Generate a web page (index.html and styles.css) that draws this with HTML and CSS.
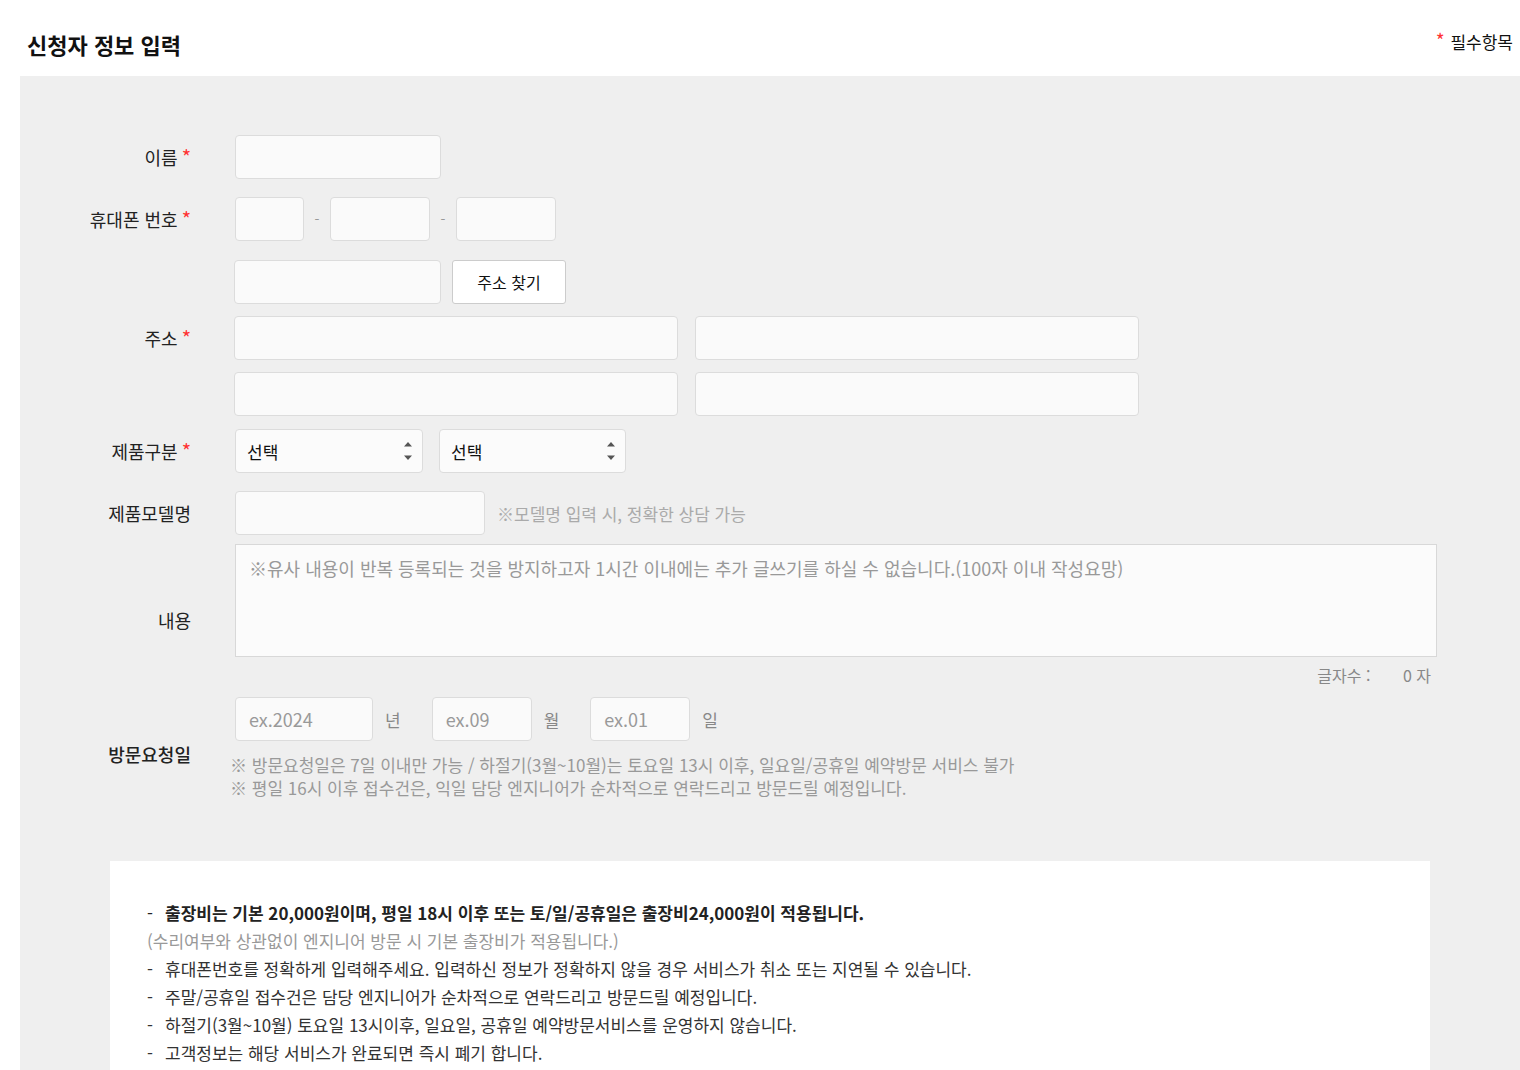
FILE: index.html
```html
<!DOCTYPE html>
<html lang="ko">
<head>
  <meta charset="UTF-8">
  <title>신청자 정보 입력</title>
  <link rel="stylesheet" href="styles.css">
</head>
<body>

  <div class="page">
    <div class="head">
      <h2 class="title">신청자 정보 입력</h2>
      <p class="req-note"><span class="star">*</span> 필수항목</p>
    </div>

    <div class="form-box">
      <div class="row row-name">
        <div class="label">이름<span class="star">*</span></div>
        <div class="field">
          <input class="inp w-206" type="text">
        </div>
      </div>

      <div class="row row-phone">
        <div class="label">휴대폰 번호<span class="star">*</span></div>
        <div class="field inline">
          <input class="inp w-69" type="text">
          <span class="dash">-</span>
          <input class="inp w-100" type="text">
          <span class="dash">-</span>
          <input class="inp w-100" type="text">
        </div>
      </div>

      <div class="row row-addr">
        <div class="label">주소<span class="star">*</span></div>
        <div class="field addr">
          <div class="inline gap-11">
            <input class="inp w-207" type="text">
            <button class="btn-find" type="button">주소 찾기</button>
          </div>
          <div class="inline gap-17">
            <input class="inp w-444" type="text">
            <input class="inp w-444" type="text">
          </div>
          <div class="inline gap-17">
            <input class="inp w-444" type="text">
            <input class="inp w-444" type="text">
          </div>
        </div>
      </div>

      <div class="row row-product">
        <div class="label">제품구분<span class="star">*</span></div>
        <div class="field inline gap-16">
          <div class="sel-wrap w-188">
            <select class="sel"><option>선택</option></select>
            <svg class="sel-arrow" width="10" height="20" viewBox="0 0 10 20"><path d="M1 5.5 L5 1 L9 5.5 Z M1 14.5 L5 19 L9 14.5 Z" fill="#555"/></svg>
          </div>
          <div class="sel-wrap w-187">
            <select class="sel"><option>선택</option></select>
            <svg class="sel-arrow" width="10" height="20" viewBox="0 0 10 20"><path d="M1 5.5 L5 1 L9 5.5 Z M1 14.5 L5 19 L9 14.5 Z" fill="#555"/></svg>
          </div>
        </div>
      </div>

      <div class="row row-model">
        <div class="label">제품모델명</div>
        <div class="field inline gap-12">
          <input class="inp w-250" type="text">
          <span class="hint">※모델명 입력 시, 정확한 상담 가능</span>
        </div>
      </div>

      <div class="row row-content">
        <div class="label label-content">내용</div>
        <div class="field">
          <textarea class="txt" placeholder="※유사 내용이 반복 등록되는 것을 방지하고자 1시간 이내에는 추가 글쓰기를 하실 수 없습니다.(100자 이내 작성요망)"></textarea>
          <div class="count">글자수 : <span class="count-num">0</span> 자</div>
        </div>
      </div>

      <div class="row row-date">
        <div class="label label-date">방문요청일</div>
        <div class="field">
          <div class="inline date-line">
            <input class="inp w-138 ph" type="text" placeholder="ex.2024">
            <span class="unit">년</span>
            <input class="inp w-100 ph" type="text" placeholder="ex.09">
            <span class="unit">월</span>
            <input class="inp w-100 ph" type="text" placeholder="ex.01">
            <span class="unit">일</span>
          </div>
          <p class="note">※ 방문요청일은 7일 이내만 가능 / 하절기(3월~10월)는 토요일 13시 이후, 일요일/공휴일 예약방문 서비스 불가</p>
          <p class="note">※ 평일 16시 이후 접수건은, 익일 담당 엔지니어가 순차적으로 연락드리고 방문드릴 예정입니다.</p>
        </div>
      </div>

      <div class="notice">
        <p class="item strong"><span class="bullet">-</span>출장비는 기본 20,000원이며, 평일 18시 이후 또는 토/일/공휴일은 출장비24,000원이 적용됩니다.</p>
        <p class="item sub">(수리여부와 상관없이 엔지니어 방문 시 기본 출장비가 적용됩니다.)</p>
        <p class="item"><span class="bullet">-</span>휴대폰번호를 정확하게 입력해주세요. 입력하신 정보가 정확하지 않을 경우 서비스가 취소 또는 지연될 수 있습니다.</p>
        <p class="item"><span class="bullet">-</span>주말/공휴일 접수건은 담당 엔지니어가 순차적으로 연락드리고 방문드릴 예정입니다.</p>
        <p class="item"><span class="bullet">-</span>하절기(3월~10월) 토요일 13시이후, 일요일, 공휴일 예약방문서비스를 운영하지 않습니다.</p>
        <p class="item"><span class="bullet">-</span>고객정보는 해당 서비스가 완료되면 즉시 폐기 합니다.</p>
      </div>
    </div>
  </div>

</body>
</html>
```

FILE: styles.css
```css
html, body {
  margin: 0;
  background: #fff;
}

body {
  font-family: "Noto Sans CJK KR", "Noto Sans", sans-serif;
  color: #333;
}

.page {
  padding-left: 20px;
}

/* header */
.head {
  display: flex;
  justify-content: space-between;
  align-items: flex-start;
  height: 76px;
  padding: 0 7px;
}

.title {
  margin: 28px 0 0;
  font-size: 22px;
  line-height: 32px;
  font-weight: 700;
  color: #111;
}

.req-note {
  margin: 30px 0 0;
  font-size: 17px;
  line-height: 22px;
  color: #111;
}

.req-note .star {
  color: #f33;
  font-size: 19px;
  margin-right: 1px;
  position: relative;
  top: -1px;
}

/* form */
.form-box {
  background: #efefef;
  padding: 59px 0 200px;
}

.row {
  display: flex;
}

.label {
  width: 171px;
  flex-shrink: 0;
  display: flex;
  align-items: center;
  justify-content: flex-end;
  font-size: 18px;
  color: #222;
}

.label .star {
  color: #f33;
  font-size: 20px;
  margin-left: 4px;
  position: relative;
  top: -1px;
}

.field {
  margin-left: 44px;
}

.inline {
  display: flex;
  align-items: center;
}

.gap-11 { gap: 11px; }
.gap-12 { gap: 12px; }
.gap-16 { gap: 16px; }
.gap-17 { gap: 17px; }

.row-phone { margin-top: 18px; }
.row-addr { margin-top: 19px; }
.row-product { margin-top: 13px; }
.row-model { margin-top: 18px; }
.row-content { margin-top: 9px; }
.row-date { margin-top: 12px; }

.addr {
  display: flex;
  flex-direction: column;
  gap: 12px;
  margin-left: 43px;
}

.inp {
  box-sizing: border-box;
  height: 44px;
  border: 1px solid #dcdcdc;
  border-radius: 4px;
  background: #fafafa;
  font-family: inherit;
  font-size: 16px;
  padding: 0 12px;
  outline: none;
}

.w-69 { width: 69px; }
.w-100 { width: 100px; }
.w-138 { width: 138px; }
.w-206 { width: 206px; }
.w-207 { width: 207px; }
.w-250 { width: 250px; }
.w-444 { width: 444px; }
.w-187 { width: 187px; }
.w-188 { width: 188px; }

.dash {
  width: 26px;
  text-align: center;
  color: #999;
  font-size: 14px;
}

.btn-find {
  box-sizing: border-box;
  width: 114px;
  height: 44px;
  background: #fff;
  border: 1px solid #ccc;
  border-radius: 3px;
  font-family: inherit;
  font-size: 16px;
  color: #111;
}

/* selects */
.sel-wrap {
  position: relative;
}

.sel {
  appearance: none;
  box-sizing: border-box;
  width: 100%;
  height: 44px;
  border: 1px solid #dcdcdc;
  border-radius: 4px;
  background: #fbfbfb;
  font-family: inherit;
  font-size: 17px;
  color: #111;
  padding: 0 11px;
  outline: none;
}

.sel-arrow {
  position: absolute;
  right: 10px;
  top: 12px;
  pointer-events: none;
}

.hint {
  font-size: 17px;
  color: #aaa;
}

/* content */
.label-content {
  padding-top: 10px;
}

.txt {
  display: block;
  box-sizing: border-box;
  width: 1202px;
  height: 113px;
  border: 1px solid #d8d8d8;
  background: #fbfbfb;
  font-family: inherit;
  font-size: 18px;
  line-height: 24px;
  padding: 11px 13px;
  resize: none;
  outline: none;
}

.txt::placeholder {
  color: #999;
}

.count {
  margin-top: 8px;
  line-height: 20px;
  font-size: 16px;
  color: #888;
  text-align: right;
  width: 1196px;
}

.count-num {
  margin-left: 28px;
}

/* date */
.label-date {
  padding-top: 12px;
  font-weight: 500;
}

.date-line .unit {
  font-size: 17px;
  color: #888;
  margin: 0 31px 0 12px;
}

.ph {
  font-size: 18px;
  padding-left: 13px;
}

.ph::placeholder {
  color: #999;
}

.note {
  margin: 0 0 0 -5px;
  font-size: 17px;
  line-height: 23px;
  color: #999;
}

.date-line + .note {
  margin-top: 12px;
}

/* notice */
.notice {
  margin: 62px 90px 0;
  background: #fff;
  padding: 38px 37px 40px;
  font-size: 17px;
  line-height: 28px;
}

.item {
  margin: 0;
  color: #333;
}

.item.strong {
  font-weight: 700;
  color: #222;
}

.item.sub {
  color: #999;
}

.bullet {
  display: inline-block;
  width: 18px;
  font-weight: 400;
}
```
